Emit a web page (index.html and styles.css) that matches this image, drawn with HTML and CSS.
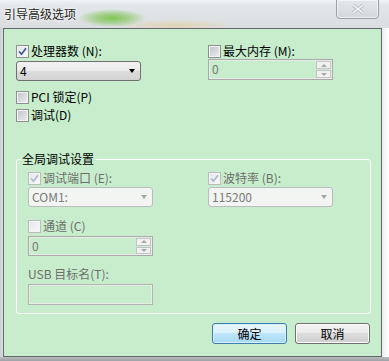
FILE: index.html
```html
<!DOCTYPE html>
<html lang="zh-CN">
<head>
    <meta charset="UTF-8">
    <title>引导高级选项</title>
    <link rel="stylesheet" href="styles.css">
</head>
<body>
    <div class="window">
        <div class="titlebar">
            <span class="title">引导高级选项</span>
            <div class="close">
                <svg width="14" height="10" viewBox="0 0 14 10">
                    <path d="M2 1 L12 9 M12 1 L2 9" stroke="#bfc4c9" stroke-width="3.4" fill="none"/>
                    <path d="M2 1 L12 9 M12 1 L2 9" stroke="#f6f7f8" stroke-width="1.4" fill="none"/>
                </svg>
            </div>
        </div>

        <div class="panel">
            <div class="cols top">
                <div class="col">
                    <label class="check">
                        <span class="box checked"><svg width="9" height="9" viewBox="0 0 9 9"><path d="M1 4.5 L3.5 7.2 L8 1.2" stroke="#3d5c99" stroke-width="1.8" fill="none"/></svg></span>
                        处理器数 (N):
                    </label>
                    <div class="combo">
                        <span>4</span>
                        <span class="arrow"></span>
                    </div>
                </div>
                <div class="col">
                    <label class="check">
                        <span class="box"></span>
                        最大内存 (M):
                    </label>
                    <div class="spin">
                        <span class="value">0</span>
                        <span class="spin-btns">
                            <span class="up"></span>
                            <span class="down"></span>
                        </span>
                    </div>
                </div>
            </div>

            <label class="check pci"><span class="box"></span>PCI 锁定(P)</label>
            <label class="check debug"><span class="box"></span>调试(D)</label>

            <fieldset class="group">
                <legend>全局调试设置</legend>
                <div class="cols inner">
                    <div class="col">
                        <label class="check disabled">
                            <span class="box checked"><svg width="9" height="9" viewBox="0 0 9 9"><path d="M1 4.5 L3.5 7.2 L8 1.2" stroke="#aebbd0" stroke-width="1.8" fill="none"/></svg></span>
                            调试端口 (E):
                        </label>
                        <div class="combo disabled">
                            <span>COM1:</span>
                            <span class="arrow"></span>
                        </div>
                    </div>
                    <div class="col">
                        <label class="check disabled">
                            <span class="box checked"><svg width="9" height="9" viewBox="0 0 9 9"><path d="M1 4.5 L3.5 7.2 L8 1.2" stroke="#aebbd0" stroke-width="1.8" fill="none"/></svg></span>
                            波特率 (B):
                        </label>
                        <div class="combo disabled">
                            <span>115200</span>
                            <span class="arrow"></span>
                        </div>
                    </div>
                </div>

                <label class="check disabled channel"><span class="box"></span>通道 (C)</label>
                <div class="spin small">
                    <span class="value">0</span>
                    <span class="spin-btns">
                        <span class="up"></span>
                        <span class="down"></span>
                    </span>
                </div>

                <div class="field-label disabled">USB 目标名(T):</div>
                <div class="textbox"></div>
            </fieldset>

            <div class="buttons">
                <button class="btn default">确定</button>
                <button class="btn">取消</button>
            </div>
        </div>
        <div class="frame-bottom"></div>
    </div>
</body>
</html>
```

FILE: styles.css
```css
body {
    margin: 0;
    width: 389px;
    height: 361px;
    overflow: hidden;
    font-family: "Noto Sans CJK SC", "Microsoft YaHei", sans-serif;
    font-size: 12px;
    color: #000;
}
.window {
    display: flex;
    flex-direction: column;
    height: 361px;
    background: linear-gradient(to right, #c9cdd0 0, #dde1e4 3px, #dde1e4 380px, #eef0f2 383px, #ffffff 389px);
}
.titlebar {
    height: 28px;
    display: flex;
    align-items: flex-start;
    justify-content: space-between;
    background:
        radial-gradient(ellipse 34px 9px at 112px 18px, rgba(120, 195, 75, 0.95), rgba(120, 195, 75, 0.5) 55%, rgba(120, 195, 75, 0) 100%),
        radial-gradient(ellipse 60px 7px at 175px 26px, rgba(235, 195, 120, 0.45), rgba(235, 195, 120, 0) 100%),
        linear-gradient(to bottom, #f2f4f5 0, #e3e6e9 6px, #dadee1 28px);
}
.title {
    margin: 6px 0 0 4px;
    line-height: 16px;
    color: #1b1b1b;
    text-shadow: 0 0 4px #fff, 0 0 2px #fff;
}
.close {
    width: 41px;
    height: 18px;
    margin-right: 10px;
    margin-top: -1px;
    border: 1px solid #9aa0a6;
    border-radius: 0 0 4px 4px;
    box-shadow: inset 0 0 0 1px rgba(255, 255, 255, 0.6);
    background: linear-gradient(to bottom, #e4e7ea, #d3d7db);
    display: flex;
    align-items: center;
    justify-content: center;
}

/* glowny panel */
.panel {
    height: 329px;
    box-sizing: border-box;
    margin: 0 7px 0 3px;
    padding: 14px 12px 0 12px;
    border: 1px solid #62676b;
    background-color: #c7edcc;
}
.frame-bottom {
    height: 4px;
    background: linear-gradient(to bottom, #b9bcbf, #9ea2a5);
}
.cols {
    display: grid;
    grid-template-columns: 192px 1fr;
}
.cols.inner {
    grid-template-columns: 180px 1fr;
    margin-top: 3px;
}
.col {
    display: flex;
    flex-direction: column;
    align-items: flex-start;
}
.check {
    display: flex;
    align-items: center;
    gap: 2px;
    height: 16px;
    line-height: 16px;
    white-space: nowrap;
}
.pci {
    margin-top: 8px;
}
.debug {
    margin-top: 2px;
}
.box {
    width: 13px;
    height: 13px;
    box-sizing: border-box;
    border: 1px solid #8e8f8f;
    box-shadow: inset 0 0 0 1px #f4f4f4;
    background: linear-gradient(135deg, #bfc4cb, #eeeff0);
    display: flex;
    align-items: center;
    justify-content: center;
}
.box.checked {
    background: linear-gradient(135deg, #e2e5e9, #fafafa);
}
.disabled {
    color: #6d6d6d;
}
.disabled .box {
    border-color: #bcbcbc;
    background: linear-gradient(135deg, #e4e8ee, #f8f8f8);
}

/* listy rozwijane */
.combo {
    width: 125px;
    height: 20px;
    box-sizing: border-box;
    margin-top: 2px;
    padding: 0 5px 0 3px;
    border: 1px solid #707070;
    border-radius: 3px;
    background: linear-gradient(to bottom, #f2f2f2 0, #ebebeb 50%, #dddddd 50%, #d3d3d3 100%);
    display: flex;
    align-items: center;
    justify-content: space-between;
    line-height: 18px;
}
.combo .arrow {
    width: 0;
    height: 0;
    border-left: 3.5px solid transparent;
    border-right: 3.5px solid transparent;
    border-top: 4px solid #000;
}
.combo.disabled {
    margin-top: 1px;
    border-color: #b9bdc0;
    background: #f2f5f2;
    color: #7a7a7a;
}
.combo.disabled .arrow {
    border-top-color: #a6a6a6;
}

/* pola liczbowe */
.spin {
    width: 125px;
    height: 21px;
    box-sizing: border-box;
    border: 1px solid #a9a9a9;
    box-shadow: inset 0 0 0 1px #e6ece6;
    display: flex;
    justify-content: space-between;
    color: #7a7a7a;
    line-height: 18px;
}
.spin.small {
    height: 20px;
    margin-top: 2px;
}
.spin .value {
    padding-left: 3px;
}
.spin-btns {
    width: 15px;
    display: flex;
    flex-direction: column;
    gap: 1px;
    padding: 1px 1px 1px 0;
}
.spin-btns span {
    flex: 1;
    border: 1px solid #c4c4c4;
    background: #f1f1f1;
    display: flex;
    align-items: center;
    justify-content: center;
}
.spin-btns .up::after,
.spin-btns .down::after {
    content: "";
    border-left: 3px solid transparent;
    border-right: 3px solid transparent;
}
.spin-btns .up::after {
    border-bottom: 3px solid #a8a8a8;
}
.spin-btns .down::after {
    border-top: 3px solid #a8a8a8;
}

/* ramka grupy */
.group {
    width: 355px;
    box-sizing: border-box;
    margin: 28px 0 0 0;
    padding: 0 11px 8px 11px;
    border: 1px solid #ffffff;
    border-radius: 3px;
    min-width: 0;
}
.group legend {
    margin-left: -7px;
    padding: 0 1px;
    line-height: 16px;
}
.channel {
    margin-top: 11px;
}
.field-label {
    margin-top: 10px;
    height: 16px;
    line-height: 16px;
}
.textbox {
    width: 125px;
    height: 21px;
    box-sizing: border-box;
    margin-top: 2px;
    border: 1px solid #b3b3b3;
    box-shadow: inset 0 0 0 1px #e6ece6;
}

/* przyciski */
.buttons {
    width: 354px;
    margin-top: 9px;
    display: flex;
    justify-content: flex-end;
    gap: 8px;
}
.btn {
    width: 75px;
    height: 21px;
    padding: 0;
    border: 1px solid #707070;
    border-radius: 3px;
    background: linear-gradient(to bottom, #f2f2f2 0, #ebebeb 50%, #dddddd 50%, #cfcfcf 100%);
    box-shadow: inset 0 0 0 1px #fcfcfc;
    font-family: "Noto Sans CJK SC", "Microsoft YaHei", sans-serif;
    font-size: 12px;
    color: #000;
}
.btn.default {
    border-color: #3c7fb1;
    background: linear-gradient(to bottom, #eaf6fd 0, #d9f0fc 50%, #bee6fd 50%, #a7d9f5 100%);
    box-shadow: inset 0 0 0 1px #d4eefc;
}
```
